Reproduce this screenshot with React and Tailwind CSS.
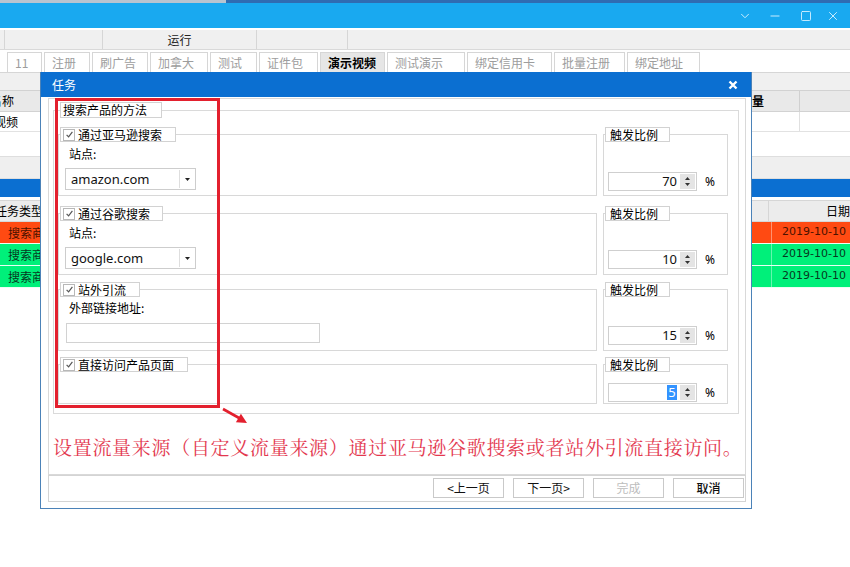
import { ChevronDown, Minus, Square, X } from "lucide-react";

const tabs = [
  { label: "11", w: "w-[35px]" },
  { label: "注册", w: "w-[46px]" },
  { label: "刷广告", w: "w-[56px]" },
  { label: "加拿大", w: "w-[58px]" },
  { label: "测试", w: "w-[47px]" },
  { label: "证件包", w: "w-[59px]" },
  { label: "演示视频", w: "w-[65px]", active: true },
  { label: "测试演示", w: "w-[78px]" },
  { label: "绑定信用卡", w: "w-[85px]" },
  { label: "批量注册", w: "w-[71px]" },
  { label: "绑定地址", w: "w-[73px]" },
];

function CheckBox() {
  return (
    <span className="mr-[3px] flex h-[12px] w-[12px] shrink-0 items-center justify-center border border-[#b8b8b8] bg-white">
      <svg width="9" height="9" viewBox="0 0 9 9">
        <path d="M1.6 4.9 L3.6 6.9 L7.4 1.9" fill="none" stroke="#555" strokeWidth="1.2" />
      </svg>
    </span>
  );
}

function Group({ legend, check, legendClass, boxClass, children }) {
  return (
    <div className="flex h-full flex-col">
      <div
        className={`relative z-10 ml-[2px] flex h-[15px] shrink-0 items-center self-start border border-[#d2d2d2] bg-white leading-none ${legendClass}`}
      >
        {check && <CheckBox />}
        <span>{legend}</span>
      </div>
      <div className={`-mt-[8px] flex-1 border border-[#d8d8d8] ${boxClass}`}>{children}</div>
    </div>
  );
}

function Combo({ value }) {
  return (
    <div className="ml-[6px] mt-[6px] flex h-[22px] w-[131px] items-center border border-[#cdcdcd] bg-white">
      <span className="flex-1 pl-[5px] font-['Noto_Sans',sans-serif] text-[13px] leading-none text-[#111]">
        {value}
      </span>
      <span className="mr-[1px] flex h-[18px] w-[15px] items-center justify-center border-l border-[#dedede]">
        <svg width="5" height="3" viewBox="0 0 5 3">
          <path d="M0 0 L5 0 L2.5 3 Z" fill="#222" />
        </svg>
      </span>
    </div>
  );
}

function Spin({ value, selected }) {
  return (
    <div className="flex items-center">
      <div className="flex h-[19px] w-[89px] items-center border border-[#cfcfcf] bg-white">
        <div className="flex flex-1 justify-end pr-[3px] font-['Noto_Sans',sans-serif] text-[13px] leading-none text-[#111]">
          {selected ? (
            <span className="flex h-[15px] w-[10px] items-center justify-center bg-[#3393ff] text-white">{value}</span>
          ) : (
            value
          )}
        </div>
        <div className="mr-[1px] flex h-[15px] w-[15px] flex-col items-center justify-center gap-[3px] bg-[#e4e4e4]">
          <svg width="5" height="3" viewBox="0 0 5 3">
            <path d="M0 3 L5 3 L2.5 0 Z" fill="#333" />
          </svg>
          <svg width="5" height="3" viewBox="0 0 5 3">
            <path d="M0 0 L5 0 L2.5 3 Z" fill="#333" />
          </svg>
        </div>
      </div>
      <span className="ml-[8px] font-['Noto_Sans',sans-serif] text-[12px]">%</span>
    </div>
  );
}

function Ratio({ value, selected, pad }) {
  return (
    <Group legend="触发比例" legendClass="pl-[4px] pr-[11px]" boxClass={`flex items-end pl-[4px] ${pad}`}>
      <Spin value={value} selected={selected} />
    </Group>
  );
}

function Button({ children, disabled, strong }) {
  return (
    <div
      className={`flex h-[20px] w-[71px] items-center justify-center border border-[#c9c9c9] bg-white ${
        disabled ? "text-[#bdbdbd]" : "text-[#111]"
      } ${strong ? "font-medium" : ""}`}
    >
      {children}
    </div>
  );
}

export default function App() {
  return (
    <div className="relative h-[567px] w-[850px] overflow-hidden bg-white font-['Noto_Sans_CJK_SC','Noto_Sans',sans-serif] text-[12px] text-black">
      {/* main window behind the dialog */}
      <div className="flex h-[3px]">
        <div className="w-[226px] bg-[#b8c4d0]" />
        <div className="flex-1 bg-[#2f6cb2]" />
      </div>
      <div className="flex h-[25px] items-center justify-end bg-[#19a9f0] pr-[10px] text-[#d6f1ff]">
        <ChevronDown size={14} strokeWidth={1.6} />
        <Minus size={14} strokeWidth={1.6} className="ml-[16px]" />
        <Square size={12} strokeWidth={1.8} className="ml-[18px]" />
        <X size={14} strokeWidth={1.6} className="ml-[14px]" />
      </div>
      <div className="h-[2px]" />
      <div className="flex h-[20px] border-b border-[#d9d9d9] bg-[#f0f0f0]">
        <div className="w-[5px] border-r border-[#d6d6d6]" />
        <div className="w-[98px] border-r border-[#d6d6d6]" />
        <div className="flex w-[154px] items-center justify-center border-r border-[#d6d6d6] text-[#222]">运行</div>
        <div className="w-[91px] border-r border-[#d6d6d6]" />
      </div>
      <div className="h-[2px]" />
      <div className="flex h-[20px] gap-[2px] pl-[7px]">
        {tabs.map((t) => (
          <div
            key={t.label}
            className={`flex h-full items-center border border-b-0 border-[#d6d6d6] pl-[7px] ${t.w} ${
              t.active ? "bg-[#e6e6e6] font-bold text-black" : "bg-white text-[#9d9d9d]"
            }`}
          >
            {t.label}
          </div>
        ))}
      </div>

      <div className="h-[18px] border-t border-[#d6d6d6] bg-[#f0f0f0]" />
      <div className="flex h-[22px] items-center overflow-hidden border-y border-[#d2d2d2] bg-[#e9e9e9]">
        <div className="w-[40px] overflow-hidden">
          <span className="-ml-[10px] block">名称</span>
        </div>
        <div className="flex-1" />
        <div className="flex h-full w-[98px]">
          <div className="flex h-full w-[48px] items-center border-r border-[#d0d0d0] font-bold">量</div>
        </div>
      </div>
      <div className="flex h-[20px] items-center border-b border-[#e2e2e2]">
        <div className="w-[40px] overflow-hidden">
          <span className="-ml-[6px] block">视频</span>
        </div>
        <div className="flex-1" />
        <div className="flex h-full w-[98px]">
          <div className="h-full w-[48px] border-r border-[#e0e0e0]" />
        </div>
      </div>
      <div className="h-[24px]" />
      <div className="h-[23px] border-y border-[#dedede] bg-[#efefef]" />
      <div className="h-[18px] bg-[#0b6fd1]" />
      <div className="h-[3px]" />
      <div className="flex h-[22px] items-center border-y border-[#d6d6d6] bg-[#ececec]">
        <div className="w-[40px] overflow-hidden">
          <span className="-ml-[5px] block whitespace-nowrap">任务类型</span>
        </div>
        <div className="flex-1" />
        <div className="flex h-full w-[98px] items-center">
          <div className="h-full w-[20px] border-r border-[#d6d6d6]" />
          <div className="flex-1 pl-[57px] whitespace-nowrap">日期</div>
        </div>
      </div>
      {[
        "bg-[#ff4a12] text-[#4a1200]",
        "bg-[#00f07a] text-[#07391f]",
        "bg-[#00f07a] text-[#07391f]",
      ].map((c, i) => (
        <div key={i} className={`flex h-[22px] items-center border-b border-[#e9fff3] ${c}`}>
          <div className="w-[40px] overflow-hidden pl-[8px] whitespace-nowrap">搜索商</div>
          <div className="flex-1" />
          <div className="flex h-full w-[98px] items-center">
            <div className="h-full w-[20px] border-r border-[#ffffff66]" />
            <div className="flex-1 overflow-hidden pl-[10px] font-['DejaVu_Sans',sans-serif] text-[11px] whitespace-nowrap">
              2019-10-10 10
            </div>
          </div>
        </div>
      ))}

      {/* dialog */}
      <div className="absolute left-[40px] top-[72px] flex h-[437px] w-[712px] flex-col border-x border-b border-[#4b82b8] bg-white">
        <div className="flex h-[25px] shrink-0 items-center justify-between bg-[#0b6fd1] pl-[11px] pr-[13px] text-white">
          <span>任务</span>
          <svg width="10" height="10" viewBox="0 0 10 10">
            <path d="M1.5 1.5 L8.5 8.5 M8.5 1.5 L1.5 8.5" stroke="#fff" strokeWidth="2.4" />
          </svg>
        </div>
        <div className="flex flex-1 flex-col pl-[7px] pr-[5px] pt-[1px]">
          <div className="flex h-[377px] flex-col border border-[#d9d9d9]">
            <div className="ml-[4px] mr-[6px] mt-[3px] flex flex-col">
              <div className="relative z-10 ml-[7px] flex h-[16px] items-center self-start border border-[#d2d2d2] bg-white pl-[2px] pr-[14px] leading-none">
                搜索产品的方法
              </div>
              <div className="-mt-[8px] flex flex-col border border-[#dadada] pb-[9px] pl-[4px] pr-[9px] pt-[16px]">
                <div className="flex h-[69px] gap-[6px]">
                  <div className="w-[539px]">
                    <Group legend="通过亚马逊搜索" check legendClass="pl-[2px] pr-[13px]" boxClass="flex flex-col pt-[11px]">
                      <div className="h-[16px] pl-[10px] leading-[16px]">站点:</div>
                      <Combo value="amazon.com" />
                    </Group>
                  </div>
                  <div className="w-[125px]">
                    <Ratio value="70" pad="pb-[4px]" />
                  </div>
                </div>
                <div className="mt-[10px] flex h-[69px] gap-[6px]">
                  <div className="w-[539px]">
                    <Group legend="通过谷歌搜索" check legendClass="pl-[2px] pr-[12px]" boxClass="flex flex-col pt-[11px]">
                      <div className="h-[16px] pl-[10px] leading-[16px]">站点:</div>
                      <Combo value="google.com" />
                    </Group>
                  </div>
                  <div className="w-[125px]">
                    <Ratio value="10" pad="pb-[5px]" />
                  </div>
                </div>
                <div className="mt-[7px] flex h-[69px] gap-[6px]">
                  <div className="w-[539px]">
                    <Group legend="站外引流" check legendClass="pl-[2px] pr-[13px]" boxClass="flex flex-col pt-[10px]">
                      <div className="h-[16px] pl-[10px] leading-[16px]">外部链接地址:</div>
                      <div className="ml-[7px] mt-[7px] h-[20px] w-[254px] border border-[#d2d2d2] bg-white" />
                    </Group>
                  </div>
                  <div className="w-[125px]">
                    <Ratio value="15" pad="pb-[5px]" />
                  </div>
                </div>
                <div className="mt-[6px] flex h-[47px] gap-[6px]">
                  <div className="w-[539px]">
                    <Group legend="直接访问产品页面" check legendClass="pl-[2px] pr-[13px]" boxClass="" />
                  </div>
                  <div className="w-[125px]">
                    <Ratio value="5" selected pad="pb-[1px]" />
                  </div>
                </div>
              </div>
            </div>
            <div className="mt-[21px] pl-[4px] font-['Noto_Serif_CJK_SC','Noto_Sans_CJK_SC',serif] text-[19px] leading-[24px] tracking-[0.7px] whitespace-nowrap text-[#e3384f]">
              设置流量来源（自定义流量来源）通过亚马逊谷歌搜索或者站外引流直接访问。
            </div>
          </div>
          <div className="flex h-[27px] items-start justify-end gap-[9px] border border-[#d4d4d4] pr-[1px] pt-[2px]">
            <Button>&lt;上一页</Button>
            <Button>下一页&gt;</Button>
            <Button disabled>完成</Button>
            <Button strong>取消</Button>
          </div>
        </div>
      </div>

      {/* red annotation */}
      <div className="absolute left-[55px] top-[98px] h-[310px] w-[165px] border-[3px] border-[#e3202e]" />
      <svg className="absolute left-[218px] top-[403px]" width="35" height="25" viewBox="0 0 35 25">
        <path d="M5 6 L22 15.5" stroke="#e3202e" strokeWidth="2.6" />
        <path d="M29 20 L17.9 19.3 L22.9 10.7 Z" fill="#e3202e" />
      </svg>
    </div>
  );
}
